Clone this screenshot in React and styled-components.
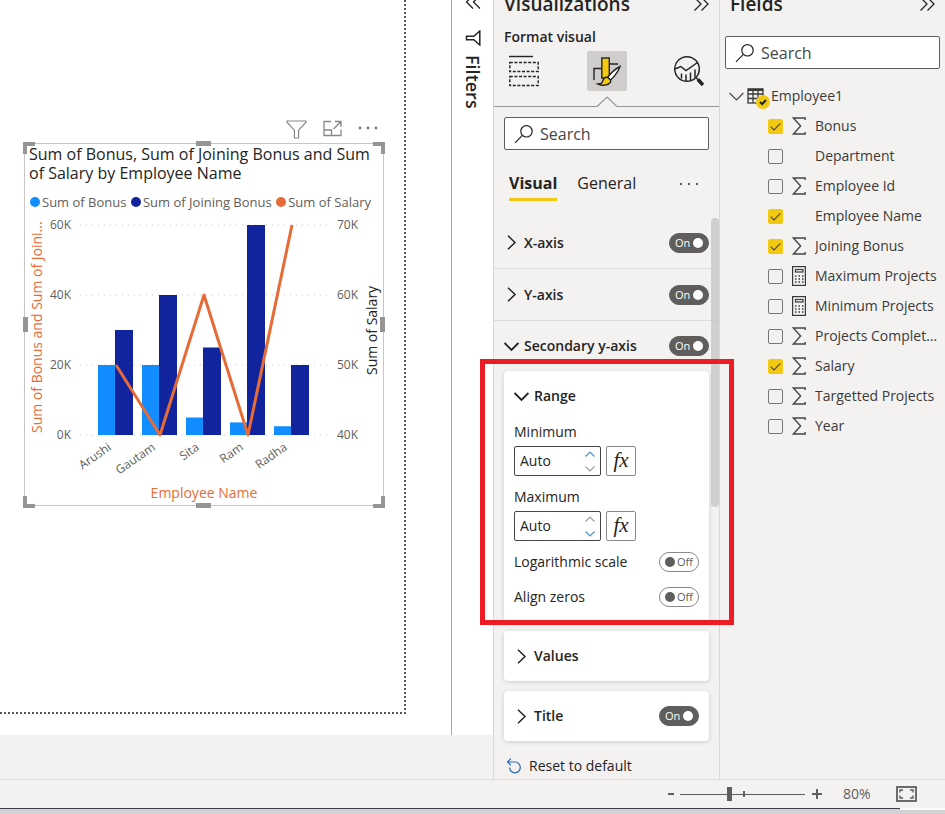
import React from "react";
import styled, { createGlobalStyle, css } from "styled-components";

const SANS = `"Open Sans", "Noto Sans", sans-serif`;

const GlobalStyle = createGlobalStyle`
  *, *::before, *::after { box-sizing: border-box; }
  body { margin: 0; background: #f3f2f1; color: #252423; font: 14px/20px ${SANS}; }
  button, input { font: inherit; color: inherit; }
  button { padding: 0; border: 0; background: none; display: flex; align-items: center; }
  h1, h2, h3, ul { margin: 0; padding: 0; list-style: none; }
  svg { display: block; flex: none; }
`;

/* ---------- page frame ---------- */

const Page = styled.div`
  min-height: 100vh;
  display: flex;
  flex-direction: column;
`;

const Workspace = styled.div`
  flex: 1;
  display: flex;
`;

const Stage = styled.div`
  flex: 1;
  min-width: 0;
  display: flex;
  padding-bottom: 44px;
`;

const Canvas = styled.main`
  flex: 1;
  min-width: 0;
  background: #fff;
  padding: 0 45px 21px 0;
  display: flex;
`;

const ReportPage = styled.section`
  flex: 1;
  min-width: 0;
  border: dotted #555;
  border-width: 0 2px 2px 0;
  padding: 118px 0 0 24px;
`;

const FiltersRail = styled.aside`
  width: 42px;
  background: #fff;
  border-left: 1px solid #a6a6a6;
  overflow: hidden;
  display: flex;
  flex-direction: column;
  align-items: center;
`;

const RailToggle = styled.button`
  height: 9px;
  align-items: flex-end;
`;

const FiltersLabel = styled.button`
  margin-top: 21px;
  flex-direction: column;
  gap: 9px;
  span {
    writing-mode: vertical-rl;
    font-size: 18px;
    line-height: 24px;
    font-weight: 600;
  }
`;

/* ---------- chart visual ---------- */

const VisualToolbar = styled.div`
  width: 360px;
  height: 25px;
  padding: 2px 6px 0 0;
  display: flex;
  justify-content: flex-end;
  align-items: flex-start;
  gap: 16px;
`;

const VisualFrame = styled.article`
  position: relative;
  width: 360px;
  border: 1px solid #c8c6c4;
  padding: 1px 4px 0;
`;

const VisualTitle = styled.h1`
  font: 500 16px/19px ${SANS};
  margin-right: -2px;
`;

const Legend = styled.ul`
  margin: 11px 0 0;
  display: flex;
  justify-content: space-between;
  height: 16px;
  font-size: 13px;
  line-height: 16px;
  color: #605e5c;
  padding: 0 8px 0 1px;
  li { display: flex; align-items: center; gap: 2px; white-space: nowrap; }
`;

const Dot = styled.span`
  width: 10px;
  height: 10px;
  border-radius: 50%;
  background: ${(p) => p.$color};
`;

const ChartSvg = styled.svg`
  margin: 4px -5px 0;
  overflow: visible;
  font-family: ${SANS};
`;

const corner = css`
  width: 12px;
  height: 12px;
  border: 0 solid #979593;
`;

const Handle = styled.span`
  position: absolute;
  ${(p) => ({
    tl: css`${corner} top: -2px; left: -2px; border-width: 4px 0 0 4px;`,
    tr: css`${corner} top: -2px; right: -2px; border-width: 4px 4px 0 0;`,
    bl: css`${corner} bottom: -3px; left: -2px; border-width: 0 0 4px 4px;`,
    br: css`${corner} bottom: -3px; right: -2px; border-width: 0 4px 4px 0;`,
    t: css`width: 15px; height: 5px; top: -3px; left: calc(50% - 8px); background: #979593;`,
    b: css`width: 15px; height: 5px; bottom: -3px; left: calc(50% - 8px); background: #979593;`,
    l: css`width: 5px; height: 15px; left: -2px; top: calc(50% - 8px); background: #979593;`,
    r: css`width: 5px; height: 15px; right: -2px; top: calc(50% - 8px); background: #979593;`,
  })[p.$at]}
`;

/* ---------- side panes ---------- */

const Pane = styled.aside`
  width: 226px;
  border-left: 1px solid #d9d8d6;
`;

const PaneHeader = styled.header`
  height: 18px;
  padding: 0 10px;
  display: flex;
  justify-content: space-between;
  align-items: flex-end;
  overflow: hidden;
  h2 { font: 600 19px/28px ${SANS}; }
  button { height: 11px; align-self: flex-start; align-items: flex-end; }
`;

const PaneSubtitle = styled.h3`
  margin: 9px 10px 0;
  font: 600 14px/20px ${SANS};
`;

const ModeBar = styled.div`
  margin-top: 4px;
  padding: 0 10px;
  display: flex;
  justify-content: space-between;
`;

const ModeButton = styled.button`
  width: 40px;
  height: 40px;
  justify-content: center;
  border-radius: 2px;
  background: ${(p) => (p.$active ? "#d0cecd" : "transparent")};
`;

const ModeDivider = styled.div`
  display: flex;
  align-items: flex-end;
  margin-top: 5px;
  &::before, &::after { content: ""; flex: 1; border-bottom: 1px solid #979593; }
`;

const SearchBox = styled.label`
  margin: ${(p) => p.$top}px ${(p) => p.$side}px 0;
  height: 33px;
  padding: 0 9px;
  display: flex;
  align-items: center;
  gap: 6px;
  background: #fff;
  border: 1px solid #605e5c;
  border-radius: 2px;
  input {
    flex: 1;
    min-width: 0;
    border: 0;
    padding: 0;
    outline: 0;
    background: none;
    font-size: 16px;
  }
  input::placeholder { color: #484644; opacity: 1; }
`;

const Tabs = styled.div`
  margin: 17px 20px 0 15px;
  display: flex;
  gap: 20px;
  align-items: flex-start;
`;

const Tab = styled.button`
  height: 34px;
  font-size: 16px;
  font-weight: ${(p) => (p.$active ? 700 : 400)};
  border-bottom: 3px solid ${(p) => (p.$active ? "#f2c811" : "transparent")};
`;

const MoreButton = styled.button`
  margin-left: auto;
  height: 34px;
`;

const Settings = styled.div`
  position: relative;
  margin-top: 16px;
`;

const ScrollThumb = styled.span`
  position: absolute;
  right: 0;
  top: 1px;
  width: 8px;
  height: 289px;
  border-radius: 4px;
  background: rgb(200 198 196 / 80%);
`;

const SectionRow = styled.div`
  height: ${(p) => (p.$divided ? 52 : 50)}px;
  padding: 0 ${(p) => (p.$card ? 0 : 10)}px;
  display: flex;
  justify-content: space-between;
  align-items: center;
  border-bottom: ${(p) => (p.$divided ? "1px solid #dddbd9" : "0")};
`;

const Disclosure = styled.button`
  gap: 5px;
  font-weight: 600;
  font-size: 14px;
`;

const Card = styled.section`
  position: relative;
  margin: 0 10px 10px;
  padding: 0 10px ${(p) => (p.$open ? 7 : 0)}px;
  background: #fff;
  border-radius: 4px;
  box-shadow: 0 1px 4px rgb(0 0 0 / 16%);
`;

const Highlight = styled.span`
  position: absolute;
  inset: -12px -25px -4px -24px;
  border: 5px solid #ed1c24;
  pointer-events: none;
  z-index: 2;
`;

const NumberField = styled.div`
  label { display: block; line-height: 22px; margin-bottom: 3px; }
  & + & { margin: 10px 0 3px; }
`;

const NumberLine = styled.div`
  display: flex;
  gap: 5px;
`;

const Spinner = styled.div`
  width: 87px;
  height: 30px;
  display: flex;
  align-items: center;
  border: 1px solid #484644;
  border-radius: 2px;
  padding: 0 5px;
  input { flex: 1; min-width: 0; border: 0; padding: 0; outline: 0; background: none; }
`;

const StepButtons = styled.div`
  display: flex;
  flex-direction: column;
  gap: 9px;
`;

const FxButton = styled.button`
  width: 30px;
  height: 30px;
  padding-bottom: 3px;
  justify-content: center;
  border: 1px solid #8a8886;
  border-radius: 2px;
  font: italic 21px/24px "Liberation Serif", serif;
`;

const SwitchRow = styled.div`
  height: 35px;
  display: flex;
  justify-content: space-between;
  align-items: center;
`;

const SwitchLabel = styled.label`
  display: grid;
  width: 40px;
  height: 20px;
  font-size: 11px;
  line-height: 20px;
  > * { grid-area: 1 / 1; }
  input {
    appearance: none;
    margin: 0;
    width: 40px;
    height: 20px;
    border: 1px solid ${(p) => (p.$on ? "#605e5c" : "#8a8886")};
    border-radius: 10px;
    background: ${(p) => (p.$on ? "#605e5c" : "#fff")};
  }
`;

const SwitchFace = styled.span`
  display: flex;
  align-items: center;
  justify-content: space-between;
  flex-direction: ${(p) => (p.$on ? "row" : "row-reverse")};
  padding: 0 6px;
  color: ${(p) => (p.$on ? "#fff" : "#605e5c")};
  pointer-events: none;
  z-index: 1;
  &::after {
    content: "";
    width: 10px;
    height: 10px;
    border-radius: 50%;
    background: ${(p) => (p.$on ? "#fff" : "#605e5c")};
  }
`;

const ResetButton = styled.button`
  margin: 12px 0 0 12px;
  height: 26px;
  gap: 7px;
`;

/* ---------- field list ---------- */

const TableRow = styled.button`
  margin: 12px 0 0 9px;
  height: 30px;
  color: #3b3a39;
`;

const TableGlyph = styled.span`
  position: relative;
  margin: 0 7px 0 3px;
`;

const SelectedBadge = styled.span`
  position: absolute;
  left: 9px;
  top: 7px;
  width: 14px;
  height: 14px;
  border-radius: 50%;
  background: #f2c811;
  display: grid;
  place-items: center;
`;

const FieldRow = styled.label`
  height: 30px;
  padding: 0 6px 0 48px;
  display: grid;
  grid-template-columns: 15px 14px minmax(0, 1fr);
  align-items: center;
  column-gap: 9px;
  color: #3b3a39;
`;

const FieldName = styled.span`
  white-space: nowrap;
  overflow: hidden;
  text-overflow: ellipsis;
`;

const CheckCell = styled.span`
  display: grid;
  > * { grid-area: 1 / 1; pointer-events: none; }
  input {
    appearance: none;
    margin: 0;
    width: 15px;
    height: 15px;
    border: 1px solid #797775;
    border-radius: 2px;
    pointer-events: auto;
  }
  input:checked { background: #f2c811; border-color: #f2c811; }
`;

/* ---------- status bar ---------- */

const StatusBar = styled.footer`
  height: 29px;
  border-top: 1px solid #dddbd9;
  display: flex;
  justify-content: flex-end;
  align-items: center;
  padding-right: 28px;
  color: #605e5c;
`;

const ZoomStep = styled.button`
  width: 10px;
  justify-content: center;
`;

const ZoomTrack = styled.span`
  position: relative;
  width: 125px;
  height: 14px;
  margin: 0 7px 0 4px;
  input {
    appearance: none;
    display: block;
    margin: 0;
    width: 100%;
    height: 14px;
    background: linear-gradient(#605e5c, #605e5c) center / 100% 1px no-repeat;
  }
  input::-webkit-slider-thumb {
    appearance: none;
    width: 5px;
    height: 14px;
    background: #605e5c;
  }
  &::after {
    content: "";
    position: absolute;
    left: 50%;
    top: 4px;
    width: 2px;
    height: 6px;
    background: #605e5c;
  }
`;

const ZoomValue = styled.output`
  margin: 0 24px 0 21px;
  width: 29px;
`;

const DesktopEdge = styled.div`
  height: 6px;
  display: flex;
  background: #d2d2d2;
  &::before { content: ""; flex: 1; border-top: 1px solid #3b3f4b; }
  &::after { content: ""; width: 45px; border-top: 2px solid #fafafa; }
`;

/* ---------- icons ---------- */

const Icon = ({ w, h, children, sw = 1, color = "#252423" }) => (
  <svg width={w} height={h} viewBox={`0 0 ${w} ${h}`} fill="none" stroke={color} strokeWidth={sw} aria-hidden="true">
    {children}
  </svg>
);

const ChevronRight = () => (
  <Icon w={15} h={15} sw={1.5}><path d="M4 .8 L11 7.5 L4 14.2" /></Icon>
);
const ChevronDown = () => (
  <Icon w={15} h={15} sw={1.8}><path d="M.6 4 L7.5 11 L14.4 4" /></Icon>
);
const DoubleChevron = ({ left }) => (
  <Icon w={16} h={14} sw={1.3}>
    {left
      ? <path d="M8 .5 L1.5 7 L8 13.5 M15 .5 L8.5 7 L15 13.5" />
      : <path d="M1.5 .5 L8 7 L1.5 13.5 M8.5 .5 L15 7 L8.5 13.5" />}
  </Icon>
);
const Magnifier = () => (
  <Icon w={20} h={20} sw={1.2}>
    <circle cx="12.5" cy="7.3" r="5.7" /><path d="M8.4 11.4 L1 18.8" />
  </Icon>
);
const Sigma = () => (
  <Icon w={14} h={18} color="#484644" sw={1.4}>
    <path d="M13.2 3 V1 H1.4 L8.6 9 L1.4 17 H13.2 V15" />
  </Icon>
);
const Calculator = () => (
  <Icon w={14} h={20} color="#3b3a39" sw={1.2}>
    <rect x=".6" y=".6" width="12.8" height="18.8" />
    <rect x="3.5" y="3.5" width="7.5" height="2.5" />
    <path d="M3 10 H12 M3 13 H12 M3 16 H12" strokeDasharray="1.5 2" strokeWidth="1.3" />
  </Icon>
);
const TableIcon = () => (
  <Icon w={17} h={16} color="#3b3a39" sw={1.3}>
    <path d="M1 1.8 H16" strokeWidth="2.4" />
    <rect x="1" y="1" width="15" height="14" />
    <path d="M1 6 H16 M1 10.5 H16 M6 2 V15 M11 2 V15" />
  </Icon>
);
const FieldsIcon = () => (
  <Icon w={30} h={32} sw={1.4}>
    <path d="M0 1.5 H24" />
    <rect x=".8" y="7.5" width="28.4" height="9" strokeDasharray="3 1.6" />
    <rect x=".8" y="21.5" width="28.4" height="9" strokeDasharray="3 1.6" />
  </Icon>
);
const FormatIcon = () => (
  <Icon w={28} h={30} sw={1.4}>
    <path d="M1 24 V12.5 H8.5 M17 8 H25" />
    <rect x="8.8" y="2" width="7.5" height="20" fill="#f2c811" />
    <path d="M27 10.5 C23 12.5 17.5 17.5 14.5 21.5 L17.5 24 C21.5 20.5 25.5 14.5 27 10.5 Z" fill="#fff" />
    <path d="M14.5 21.3 C12 21 10.2 22.8 9.6 25.4 C9.2 27 7.5 27.8 5 28 C9.5 30.2 15.5 29.4 17.4 26.4 C17.8 25.5 17.8 24.7 17.5 24 Z" fill="#f2c811" />
  </Icon>
);
const AnalyticsIcon = () => (
  <Icon w={30} h={32} sw={1.5}>
    <circle cx="13" cy="14" r="12.3" />
    <path d="M.8 14 L6.8 11.5 L12 15.5 L23.5 7.5" />
    <path d="M7.5 18.5 V23.5 M12 19.5 V26 M16.5 17.5 V26 M21 14.5 V22.5" />
    <path d="M22 22.5 L24.5 25" />
    <path d="M24 24.5 L29 30" strokeWidth="3.6" />
  </Icon>
);
const CaretTip = () => (
  <Icon w={20} h={11} color="#979593" sw={1.2}><path d="M0 10.5 L10 1 L20 10.5" /></Icon>
);
const SideFunnel = () => (
  <Icon w={16} h={16} sw={1.5}>
    <path d="M14.8 1 V15 L8.8 9.8 H1.5 V6.2 H8.8 Z" />
  </Icon>
);
const FunnelIcon = () => (
  <Icon w={21} h={19} color="#8a8886" sw={1.2}>
    <path d="M1 1 H20 V2.2 L12.6 10.2 V18 H8.4 V10.2 L1 2.2 Z" />
  </Icon>
);
const FocusIcon = () => (
  <Icon w={19} h={17} color="#8a8886" sw={1.3}>
    <path d="M8 1.5 H1 V15.5 H18 V9.5 M1 10 H8.5 V15.5 M10.5 9 L17.5 2 M12 1.5 H18 V7" />
  </Icon>
);
const Dots = ({ r = 1, color = "#252423", step = 7 }) => (
  <svg width="20" height="17" viewBox="0 0 20 17" fill={color} aria-hidden="true">
    {[-1, 0, 1].map((i) => <circle key={i} cx={10 + i * step} cy="8" r={r} />)}
  </svg>
);
const ResetIcon = () => (
  <Icon w={16} h={16} color="#2b6cb0" sw={1.2}>
    <path d="M4.8 .8 L1.5 4 L4.8 7.2 M1.8 4 H9 A5.4 5.4 0 1 1 3.5 9.5" />
  </Icon>
);
const CheckMark = () => (
  <Icon w={15} h={15} color="#484644" sw={1.1}><path d="M2.6 7.6 L6 11 L12.4 4.4" /></Icon>
);
const FitIcon = () => (
  <Icon w={21} h={16} color="#605e5c" sw={1.4}>
    <rect x="1" y="1" width="19" height="14" strokeWidth="1.8" />
    <path d="M4 6.5 V4 H7 M14 4 H17 V6.5 M17 9.5 V12 H14 M7 12 H4 V9.5" />
  </Icon>
);

/* ---------- data ---------- */

const employees = [
  { name: "Arushi", bonus: 20, joining: 30, salary: 50 },
  { name: "Gautam", bonus: 20, joining: 40, salary: 40 },
  { name: "Sita", bonus: 5, joining: 25, salary: 60 },
  { name: "Ram", bonus: 3.6, joining: 60, salary: 40 },
  { name: "Radha", bonus: 2.5, joining: 20, salary: 70 },
];

const series = [
  { label: "Sum of Bonus", color: "#118dff" },
  { label: "Sum of Joining Bonus", color: "#12239e" },
  { label: "Sum of Salary", color: "#e66c37" },
];

const fields = [
  { name: "Bonus", icon: Sigma, checked: true },
  { name: "Department" },
  { name: "Employee Id", icon: Sigma },
  { name: "Employee Name", checked: true },
  { name: "Joining Bonus", icon: Sigma, checked: true },
  { name: "Maximum Projects", icon: Calculator },
  { name: "Minimum Projects", icon: Calculator },
  { name: "Projects Completed", icon: Sigma },
  { name: "Salary", icon: Sigma, checked: true },
  { name: "Targetted Projects", icon: Sigma },
  { name: "Year", icon: Sigma },
];

/* ---------- parts ---------- */

function ComboChart() {
  const base = 221;
  const scale = 3.5;
  const centre = (i) => 92 + i * 44;
  const salaryY = (v) => base - (v - 40) * 7;
  const points = employees.map((e, i) => `${centre(i)},${salaryY(e.salary)}`).join(" ");
  return (
    <ChartSvg width="360" height="291" viewBox="0 0 360 291" role="img" aria-label="Bonus, joining bonus and salary by employee">
      {[0, 20, 40, 60].map((v) => (
        <g key={v} fontSize="12" fill="#605e5c">
          <line x1="56" x2="305" y1={base - v * scale} y2={base - v * scale} stroke="#c8c6c4" strokeDasharray="1 5" />
          <text x="47" y={base + 4 - v * scale} textAnchor="end">{v}K</text>
          <text x="313" y={base + 4 - v * scale}>{40 + v / 2}K</text>
        </g>
      ))}
      {employees.map((e, i) => (
        <g key={e.name}>
          <rect x={centre(i) - 18} y={base - e.bonus * scale} width="17" height={e.bonus * scale} fill={series[0].color} />
          <rect x={centre(i) - 1} y={base - e.joining * scale} width="18" height={e.joining * scale} fill={series[1].color} />
          <text
            fontSize="12"
            fill="#605e5c"
            textAnchor="end"
            transform={`translate(${centre(i) - 4} ${base + 14}) rotate(-35)`}
          >
            {e.name}
          </text>
        </g>
      ))}
      <polyline points={points} fill="none" stroke={series[2].color} strokeWidth="3" strokeLinejoin="round" />
      <g fontSize="14">
        <text transform="translate(18 219) rotate(-90)" fill="#e66c37">Sum of Bonus and Sum of Joini...</text>
        <text transform="translate(353 161) rotate(-90)" fill="#252423">Sum of Salary</text>
        <text x="180" y="284" textAnchor="middle" fill="#e66c37">Employee Name</text>
      </g>
    </ChartSvg>
  );
}

function Switch({ label, on }) {
  return (
    <SwitchLabel $on={on}>
      <input type="checkbox" role="switch" aria-label={label} defaultChecked={on} />
      <SwitchFace $on={on}>{on ? "On" : "Off"}</SwitchFace>
    </SwitchLabel>
  );
}

function Section({ title, open, toggle, card, divided }) {
  return (
    <SectionRow $card={card} $divided={divided}>
      <Disclosure type="button" aria-expanded={!!open}>
        {open ? <ChevronDown /> : <ChevronRight />}
        {title}
      </Disclosure>
      {toggle && <Switch label={title} on />}
    </SectionRow>
  );
}

function AutoField({ label, upActive }) {
  const id = `range-${label.toLowerCase()}`;
  const tone = (active) => (active ? "#4a90c8" : "#a19f9d");
  return (
    <NumberField>
      <label htmlFor={id}>{label}</label>
      <NumberLine>
        <Spinner>
          <input id={id} defaultValue="Auto" />
          <StepButtons>
            <button type="button" aria-label={`Increase ${label}`}>
              <Icon w={10} h={6} sw={1.2} color={tone(upActive)}><path d="M.5 5.5 L5 1 L9.5 5.5" /></Icon>
            </button>
            <button type="button" aria-label={`Decrease ${label}`}>
              <Icon w={10} h={6} sw={1.2} color={tone(!upActive)}><path d="M.5 .5 L5 5 L9.5 .5" /></Icon>
            </button>
          </StepButtons>
        </Spinner>
        <FxButton type="button" aria-label={`Conditional formatting for ${label}`}>fx</FxButton>
      </NumberLine>
    </NumberField>
  );
}

function Search({ name, ...place }) {
  return (
    <SearchBox {...place}>
      <Magnifier />
      <input type="search" placeholder="Search" aria-label={name} />
    </SearchBox>
  );
}

export default function App() {
  return (
    <Page>
      <GlobalStyle />
      <Workspace>
        <Stage>
          <Canvas>
            <ReportPage>
              <VisualToolbar>
                <button type="button" aria-label="Filters"><FunnelIcon /></button>
                <button type="button" aria-label="Focus mode"><FocusIcon /></button>
                <button type="button" aria-label="More options"><Dots r={1.4} color="#797775" step={8} /></button>
              </VisualToolbar>
              <VisualFrame>
                <VisualTitle>Sum of Bonus, Sum of Joining Bonus and Sum of Salary by Employee Name</VisualTitle>
                <Legend>
                  {series.map((s) => (
                    <li key={s.label}><Dot $color={s.color} />{s.label}</li>
                  ))}
                </Legend>
                <ComboChart />
                {["tl", "t", "tr", "l", "r", "bl", "b", "br"].map((at) => <Handle key={at} $at={at} />)}
              </VisualFrame>
            </ReportPage>
          </Canvas>
          <FiltersRail>
            <RailToggle type="button" aria-label="Expand filters"><DoubleChevron left /></RailToggle>
            <FiltersLabel type="button"><SideFunnel /><span>Filters</span></FiltersLabel>
          </FiltersRail>
        </Stage>

        <Pane>
          <PaneHeader>
            <h2>Visualizations</h2>
            <button type="button" aria-label="Collapse visualizations"><DoubleChevron /></button>
          </PaneHeader>
          <PaneSubtitle>Format visual</PaneSubtitle>
          <ModeBar>
            <ModeButton type="button" aria-label="Build visual"><FieldsIcon /></ModeButton>
            <ModeButton type="button" aria-label="Format visual" $active><FormatIcon /></ModeButton>
            <ModeButton type="button" aria-label="Analytics"><AnalyticsIcon /></ModeButton>
          </ModeBar>
          <ModeDivider><CaretTip /></ModeDivider>
          <Search name="Search format options" $top={10} $side={10} />
          <Tabs role="tablist">
            <Tab type="button" role="tab" aria-selected="true" $active>Visual</Tab>
            <Tab type="button" role="tab" aria-selected="false">General</Tab>
            <MoreButton type="button" aria-label="More options"><Dots step={8} /></MoreButton>
          </Tabs>
          <Settings>
            <ScrollThumb />
            <Section title="X-axis" toggle divided />
            <Section title="Y-axis" toggle divided />
            <Section title="Secondary y-axis" open toggle />
            <Card $open>
              <Section title="Range" open card />
              <AutoField label="Minimum" upActive />
              <AutoField label="Maximum" />
              <SwitchRow>Logarithmic scale<Switch label="Logarithmic scale" /></SwitchRow>
              <SwitchRow>Align zeros<Switch label="Align zeros" /></SwitchRow>
              <Highlight />
            </Card>
            <Card><Section title="Values" card /></Card>
            <Card><Section title="Title" toggle card /></Card>
          </Settings>
          <ResetButton type="button"><ResetIcon />Reset to default</ResetButton>
        </Pane>

        <Pane>
          <PaneHeader>
            <h2>Fields</h2>
            <button type="button" aria-label="Collapse fields"><DoubleChevron /></button>
          </PaneHeader>
          <Search name="Search fields" $top={18} $side={5} />
          <TableRow type="button" aria-expanded="true">
            <Icon w={15} h={15} sw={1.2} color="#484644"><path d="M.6 4 L7.5 11 L14.4 4" /></Icon>
            <TableGlyph>
              <TableIcon />
              <SelectedBadge>
                <Icon w={8} h={8} sw={2}><path d="M1 4 L3.2 6 L7 2" /></Icon>
              </SelectedBadge>
            </TableGlyph>
            Employee1
          </TableRow>
          {fields.map(({ name, icon: Glyph, checked }) => (
            <FieldRow key={name}>
              <CheckCell>
                <input type="checkbox" defaultChecked={checked} />
                {checked && <CheckMark />}
              </CheckCell>
              <span>{Glyph && <Glyph />}</span>
              <FieldName>{name}</FieldName>
            </FieldRow>
          ))}
        </Pane>
      </Workspace>

      <StatusBar>
        <ZoomStep type="button" aria-label="Zoom out"><Icon w={6} h={10} color="#605e5c" sw={2}><path d="M0 5 H6" /></Icon></ZoomStep>
        <ZoomTrack><input type="range" min="10" max="400" defaultValue="163" aria-label="Zoom" /></ZoomTrack>
        <ZoomStep type="button" aria-label="Zoom in"><Icon w={10} h={10} color="#605e5c" sw={2}><path d="M0 5 H10 M5 0 V10" /></Icon></ZoomStep>
        <ZoomValue>80%</ZoomValue>
        <button type="button" aria-label="Fit to page"><FitIcon /></button>
      </StatusBar>
      <DesktopEdge />
    </Page>
  );
}
